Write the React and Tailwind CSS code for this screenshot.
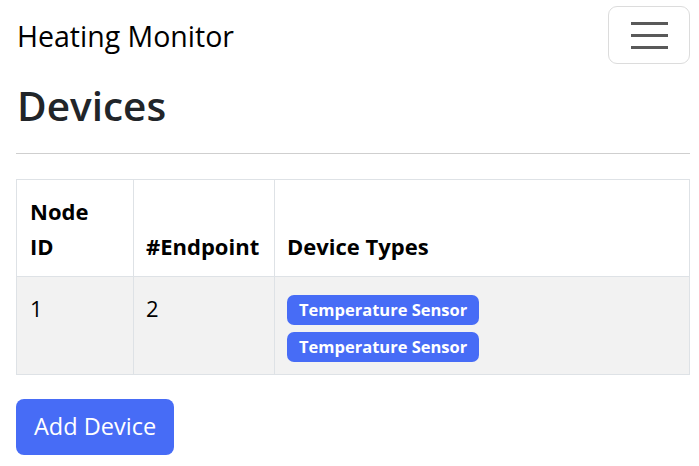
export default function App() {
  const font = { fontFamily: '"Open Sans", "Noto Sans", Arial, sans-serif' };
  return (
    <div className="min-h-screen bg-white text-[#212529]" style={font}>
      <nav className="flex h-[72px] items-center justify-between px-[17px]">
        <span className="text-[28.5px] leading-none text-black">Heating Monitor</span>
        <button className="-mr-[8px] flex h-[58px] w-[82px] flex-col items-center justify-center gap-[9px] rounded-[9px] border border-[#dcdcdc] -mt-[2px]">
          <span className="block h-[3px] w-[37px] bg-[#595959]" />
          <span className="block h-[3px] w-[37px] bg-[#595959]" />
          <span className="block h-[3px] w-[37px] bg-[#595959]" />
        </button>
      </nav>
      <div className="pl-[16px] pr-[9px]">
        <h1 className="mt-[8px] pl-[1px] text-[40.5px] font-semibold leading-[52px]">Devices</h1>
        <hr className="mt-[21px] border-t border-[#cfcfcf]" />
        <table className="mt-[25px] w-full table-fixed border-collapse text-[22px] text-black">
          <thead>
            <tr>
              <th className="w-[117px] border border-[#dee2e6] px-[13px] pt-[14px] pb-[12px] text-left align-bottom font-bold leading-[35px]">
                Node
                <br />
                ID
              </th>
              <th className="w-[141px] border border-[#dee2e6] px-[12px] pb-[12px] text-left align-bottom font-bold leading-[35px]">
                #Endpoint
              </th>
              <th className="border border-[#dee2e6] px-[12px] pb-[12px] text-left align-bottom font-bold leading-[35px]">
                Device Types
              </th>
            </tr>
          </thead>
          <tbody>
            <tr className="bg-[#f2f2f2]">
              <td className="h-[98px] border border-[#dee2e6] px-[13px] pt-[14px] align-top leading-[35px]">1</td>
              <td className="border border-[#dee2e6] px-[12px] pt-[14px] align-top leading-[35px]">2</td>
              <td className="border border-[#dee2e6] px-[12px] pt-[18px] align-top">
                <div className="flex flex-col items-start gap-[7px]">
                  <span className="rounded-[7px] bg-[#476cf6] px-[12px] py-[4px] text-[16.5px] font-bold leading-[22px] text-white">
                    Temperature Sensor
                  </span>
                  <span className="rounded-[7px] bg-[#476cf6] px-[12px] py-[4px] text-[16.5px] font-bold leading-[22px] text-white">
                    Temperature Sensor
                  </span>
                </div>
              </td>
            </tr>
          </tbody>
        </table>
        <button className="mt-[24px] h-[56px] rounded-[8px] bg-[#476cf6] px-[18px] text-[23.5px] text-white">
          Add Device
        </button>
      </div>
    </div>
  );
}
